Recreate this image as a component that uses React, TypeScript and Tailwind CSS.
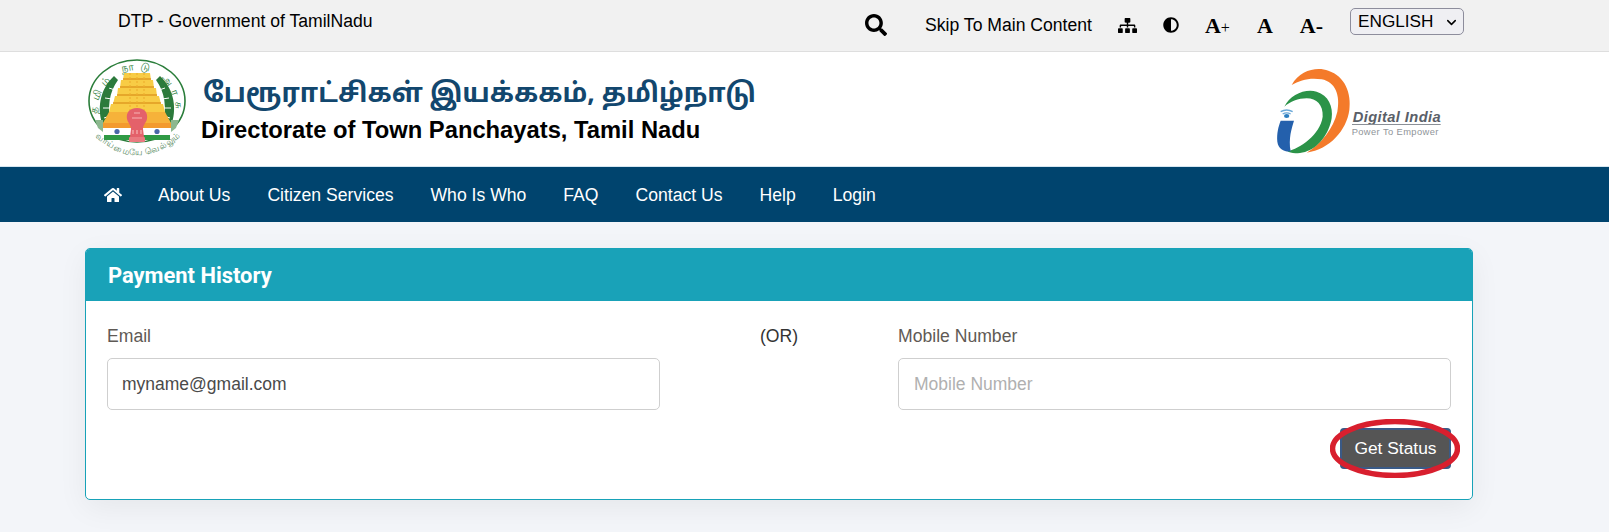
import React from "react";
import { FaSearch, FaSitemap, FaAdjust, FaHome } from "react-icons/fa";
import { ChevronDown } from "lucide-react";

const Seal = () => (
  <svg width="108" height="104" viewBox="0 0 108 104" className="shrink-0">
    <ellipse cx="50" cy="43" rx="48" ry="41" fill="#fff" stroke="#2a7d3a" strokeWidth="1.6" />
    {/* palms */}
    <path d="M27 18 C12 32 10 52 16 68 L24 68 C20 50 22 34 31 22Z" fill="#2c7a3c" />
    <path d="M73 18 C88 32 90 52 84 68 L76 68 C80 50 78 34 69 22Z" fill="#2c7a3c" />
    <path d="M22 30 L28 32 M18 40 L25 41 M16 50 L23 50 M17 60 L23 58 M78 30 L72 32 M82 40 L75 41 M84 50 L77 50 M83 60 L77 58" stroke="#fff" strokeWidth="1" />
    {/* gopuram */}
    <path d="M37 15 L63 15 L64 22 L66 22 L67 30 L69 30 L70 38 L72 38 L74 46 L76 46 L78 54 L22 54 L24 46 L26 46 L28 38 L30 38 L31 30 L33 30 L34 22 L36 22 Z" fill="#f8cc45" />
    <path d="M36 21 L64 21 M33 29 L67 29 M30 37 L70 37 M26 45 L74 45" stroke="#e09a22" strokeWidth="1.3" />
    <path d="M43 15 V54 M50 15 V54 M57 15 V54" stroke="#eeb02f" strokeWidth="1.2" strokeDasharray="2 2" />
    <path d="M22 54 L78 54 L84 65 L16 65 Z" fill="#f6b23a" />
    {/* flag bands */}
    <path d="M16 65 H84 V70 H16 Z" fill="#f39a2e" />
    <path d="M14 70 H86 V77 H14 Z" fill="#fff" />
    <path d="M17 77 H83 V82 H17 Z" fill="#2f9a45" />
    <path d="M8 62 L16 62 L16 74 L11 70Z M92 62 L84 62 L84 74 L89 70Z" fill="#8cb88f" />
    <circle cx="30" cy="73.5" r="2.6" fill="#4a68a8" />
    <circle cx="70" cy="73.5" r="2.6" fill="#4a68a8" />
    {/* emblem */}
    <path d="M50 50 C58 50 61 55 60 61 C59 65 56 67 56 71 L57 79 L43 79 L44 71 C44 67 41 65 40 61 C39 55 42 50 50 50Z" fill="#e4616a" />
    <path d="M45 60 H55 M47 55 H53 M46 72 V76 M50 72 V76 M54 72 V76" stroke="#f5b3b3" strokeWidth="1.2" />
    <rect x="42" y="79" width="16" height="5" rx="1" fill="#ea7a80" />
    <path id="sealBottom" d="M5 76 Q50 119 97 76" fill="none" />
    <text fontSize="8.6" fill="#4e8355" fontFamily="'Noto Sans', sans-serif" letterSpacing="0.4" textAnchor="middle">
      <textPath href="#sealBottom" startOffset="50%">வாய்மையே வெல்லும்</textPath>
    </text>
    <path id="sealTop" d="M11 62 C8 32 28 12 50 12 C72 12 92 32 89 62" fill="none" />
    <text fontSize="10.5" fill="#2a7d3a" fontFamily="'Noto Sans', sans-serif" letterSpacing="5" textAnchor="middle">
      <textPath href="#sealTop" startOffset="50%">தமிழ் நாடு அரசு</textPath>
    </text>
  </svg>
);

const DigitalIndia = () => (
  <svg width="200" height="100" viewBox="0 0 600 300">
    <path d="M125 75 C150 30 200 20 235 32 C285 48 305 100 298 150 C290 210 240 268 170 278 C215 250 250 205 262 155 C272 105 255 65 215 58 C180 52 150 60 125 75 Z" fill="#f47a2a" />
    <path d="M103 140 C120 105 165 85 200 95 C235 105 250 140 245 175 C238 220 205 265 165 276 C140 282 120 280 112 274 C150 265 210 225 218 170 C220 135 200 115 170 115 C145 115 120 125 103 140 Z" fill="#2b9348" />
    <path d="M92 182 L132 182 C125 205 115 235 122 274 C105 276 85 268 82 245 C80 220 85 200 92 182 Z" fill="#2460ac" />
    <ellipse cx="110" cy="168" rx="8" ry="6" fill="#2c7ec0" />
    <path d="M92 155 Q110 145 128 155 M98 162 Q110 155 122 162" stroke="#6aa8d8" strokeWidth="4" fill="none" />
    <text x="308" y="185" fontSize="44" fontWeight="700" fontStyle="italic" fill="#5a6068" fontFamily="'Liberation Sans', sans-serif" textLength="264">Digital India</text>
    <rect x="306" y="192" width="266" height="3" fill="#8a8f96" />
    <text x="305" y="226" fontSize="28" fill="#8f9499" fontFamily="'Liberation Sans', sans-serif" textLength="260">Power To Empower</text>
  </svg>
);

const navItems = ["About Us", "Citizen Services", "Who Is Who", "FAQ", "Contact Us", "Help", "Login"];

export default function App() {
  return (
    <div className="min-h-[532px] bg-[#f3f5f9] font-['Liberation_Sans',sans-serif] text-black overflow-hidden">
      <div className="h-[52px] bg-[#f1f1f1] border-b border-[#dedede] flex items-start">
        <div className="ml-[118px] mt-[10px] text-[17.6px] leading-[22px]">DTP - Government of TamilNadu</div>
        <div className="ml-auto mr-[145px] flex items-center h-[50px]">
          <FaSearch className="text-[22px] mr-[38px]" />
          <span className="text-[17.6px] mr-[26px]">Skip To Main Content</span>
          <FaSitemap className="text-[19px] mr-[26px]" />
          <FaAdjust className="text-[16px] mr-[26px]" />
          <span className="font-['Liberation_Serif',serif] font-bold text-[22px] mr-[27px]">A<span className="font-normal text-[16px]">+</span></span>
          <span className="font-['Liberation_Serif',serif] font-bold text-[22px] mr-[27px]">A</span>
          <span className="font-['Liberation_Serif',serif] font-bold text-[22px] mr-[27px]">A-</span>
          <div className="relative -mt-[7px]">
            <select className="block appearance-none w-[114px] h-[27px] border border-[#8d8d9c] rounded-[5px] bg-[#efeff3] text-[17.2px] pl-[7px]">
              <option>ENGLISH</option>
            </select>
            <ChevronDown className="absolute right-[5px] top-[7px] w-[15px] h-[15px] pointer-events-none" strokeWidth={2.4} />
          </div>
        </div>
      </div>
      <div className="h-[115px] bg-white border-b border-[#d6e6f0] flex items-start">
        <div className="ml-[87px] mt-[6px]"><Seal /></div>
        <div className="ml-[6px] mt-[19px]">
          <div className="font-['Noto_Sans','Noto_Sans_Tamil',sans-serif] font-bold text-[26.5px] leading-[42px] text-[#12476e] ml-[2px]">பேரூராட்சிகள் இயக்ககம், தமிழ்நாடு</div>
          <div className="font-bold text-[23.75px] leading-[28px] mt-[3px]">Directorate of Town Panchayats, Tamil Nadu</div>
        </div>
        <div className="ml-auto mr-[159px] mt-[8px]"><DigitalIndia /></div>
      </div>
      <nav className="h-[55px] bg-[#00446e] flex items-center pl-[104px] pt-[1px] text-white text-[17.6px] gap-[37px]">
        <FaHome className="text-[18px] -mr-[1px]" />
        {navItems.map((n) => <span key={n}>{n}</span>)}
      </nav>
      <div className="ml-[85px] mt-[26px] w-[1388px] h-[252px] bg-white border border-[#17a2b8] rounded-[5px] shadow-[0_8px_30px_rgba(0,0,0,0.06)]">
        <div className="h-[52px] bg-[#19a2b8] rounded-t-[4px] flex items-center pl-[22px] pt-[3px] font-['Roboto',sans-serif] font-bold text-[21.9px] text-white">Payment History</div>
        <div className="px-[21px] pt-[25px]">
          <div className="flex">
            <div className="w-[553px]">
              <div className="text-[17.6px] leading-[20px] text-[#5f5a55]">Email</div>
              <input readOnly value="myname@gmail.com" className="mt-[12px] w-full h-[52px] border border-[#cfcfcf] rounded-[5px] px-[14px] text-[17.5px] text-[#4a4a4a] outline-none" />
            </div>
            <div className="ml-[100px] w-[138px] text-[17.6px] leading-[20px] text-[#333]">(OR)</div>
            <div className="w-[553px]">
              <div className="text-[17.6px] leading-[20px] text-[#5f5a55]">Mobile Number</div>
              <input placeholder="Mobile Number" className="mt-[12px] w-full h-[52px] border border-[#cfcfcf] rounded-[5px] px-[15px] text-[17.5px] placeholder:text-[#b0b0b0] outline-none" />
            </div>
          </div>
          <div className="flex justify-end mt-[18px]">
            <div className="relative">
              <button className="block w-[111px] h-[41px] bg-[#555] border-2 border-[#3a5a86] rounded-[4px] text-white text-[17.4px]">Get Status</button>
              <svg width="130" height="59" viewBox="0 0 130 59" className="absolute left-[-10px] top-[-9px] pointer-events-none">
                <ellipse cx="65" cy="29.5" rx="62.5" ry="27" fill="none" stroke="#d81f2e" strokeWidth="5.5" />
              </svg>
            </div>
          </div>
        </div>
      </div>
    </div>
  );
}
